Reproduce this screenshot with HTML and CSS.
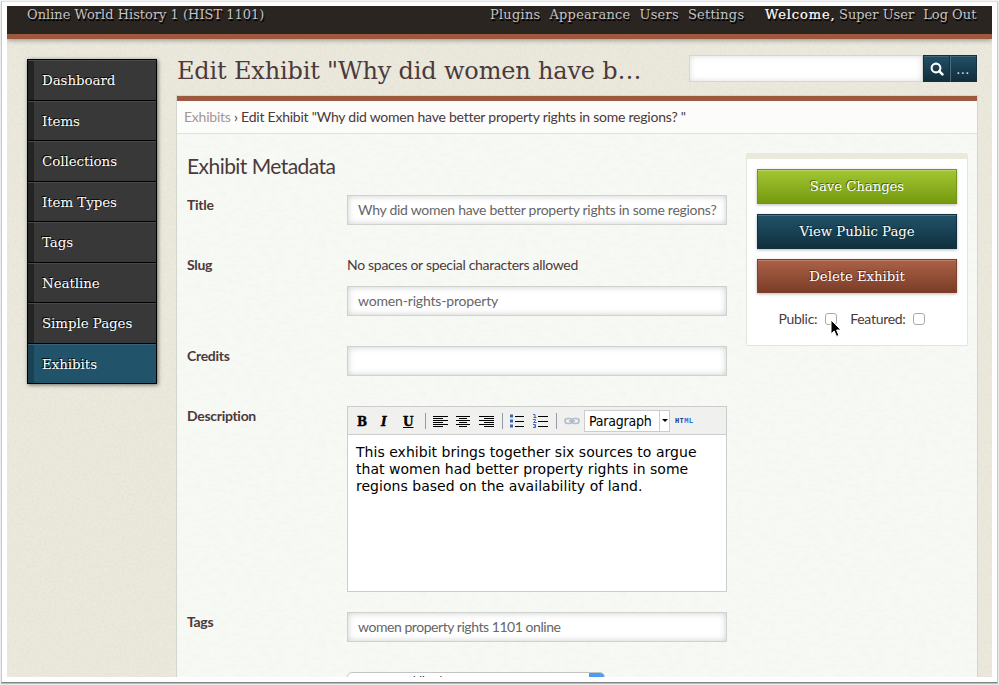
FILE: index.html
```
<!DOCTYPE html>
<html lang="en">
<head>
<meta charset="utf-8">
<title>Edit Exhibit</title>
<link rel="stylesheet" href="styles.css">
</head>
<body>
<div class="window">
<div class="screen">
  <header class="topbar">
    <a class="site-title">Online World History 1 (HIST 1101)</a>
    <nav class="global-nav"><a>Plugins</a><a>Appearance</a><a>Users</a><a>Settings</a></nav>
    <div class="user-nav"><span class="welcome">Welcome,</span><a class="user">Super User</a><a class="logout">Log Out</a></div>
  </header>
  <div class="layout">
    <nav class="sidebar">
      <a>Dashboard</a><a>Items</a><a>Collections</a><a>Item Types</a><a>Tags</a><a>Neatline</a><a>Simple Pages</a><a class="current">Exhibits</a>
    </nav>
    <main class="main">
      <div class="heading">
        <h1>Edit Exhibit "Why did women have b…</h1>
        <div class="search">
          <div class="search-input"></div>
          <button class="search-btn"><svg width="14" height="14" viewBox="0 0 14 14"><circle cx="6" cy="6" r="4.4" fill="none" stroke="#fff" stroke-width="2.1"/><path d="M9.2 9.2L12.4 12.4" stroke="#fff" stroke-width="2.6" stroke-linecap="round"/></svg></button>
          <button class="search-btn dots">...</button>
        </div>
      </div>
      <section class="content">
        <div class="crumbs"><a>Exhibits</a> › Edit Exhibit "Why did women have better property rights in some regions? "</div>
        <div class="columns">
          <div class="form">
            <h2>Exhibit Metadata</h2>
            <div class="field"><label>Title</label><div class="inputs"><div class="text-input title-input">Why did women have better property rights in some regions?</div></div></div>
            <div class="field"><label>Slug</label><div class="inputs"><p>No spaces or special characters allowed</p><div class="text-input slug-input">women-rights-property</div></div></div>
            <div class="field"><label>Credits</label><div class="inputs"><div class="text-input"></div></div></div>
            <div class="field field-desc"><label>Description</label>
              <div class="inputs">
                <div class="editor">
                  <div class="toolbar">
                    <b class="tb">B</b><i class="tb">I</i><u class="tb">U</u>
                    <span class="sep"></span>
                    <svg class="ic" width="16" height="14" viewBox="0 0 16 14"><path d="M0 2.5h15M0 4.5h10M0 6.500h15M0 8.500h10M0 10.500h15M0 12.500h10" stroke="#000"/></svg>
                    <svg class="ic" width="16" height="14" viewBox="0 0 16 14"><path d="M0 2.500h14M3 4.500h8M0 6.500h14M3 8.500h8M0 10.500h14M3 12.500h8" stroke="#000"/></svg>
                    <svg class="ic" width="16" height="14" viewBox="0 0 16 14"><path d="M0 2.500h15M5 4.500h10M0 6.500h15M5 8.500h10M0 10.500h15M5 12.500h10" stroke="#000"/></svg>
                    <span class="sep"></span>
                    <svg class="ic" width="16" height="14" viewBox="0 0 16 14"><path d="M5 2.500h9M5 7.500h9M5 12.500h9" stroke="#000"/><path d="M0 2h3M0 7h3M0 12h3" stroke="#3a64b0" stroke-width="3"/></svg>
                    <svg class="ic" width="16" height="14" viewBox="0 0 16 14"><path d="M5 2.500h10M5 7.500h10M5 12.500h10" stroke="#000"/><path d="M0 .5h2v3M.500 3.500h3M0 5.500h2.500v1l-2 2h3M0 10.500h2.500v3H0M1 12h1.500" stroke="#3b62c8" fill="none"/></svg>
                    <span class="sep"></span>
                    <svg class="ic link" width="16" height="14" viewBox="0 0 16 14"><g fill="none" stroke="#b3bccb" stroke-width="1.600"><rect x="1" y="4.500" width="7" height="5" rx="2.500"/><rect x="8" y="4.500" width="7" height="5" rx="2.500"/></g><path d="M5 7h6" stroke="#a9b5c9" stroke-width="1.500"/></svg>
                    <span class="select"><span class="value">Paragraph</span><span class="arrow"></span></span>
                    <span class="html">HT<em>ML</em></span>
                  </div>
                  <div class="editor-body">This exhibit brings together six sources to argue<br>that women had better property rights in some<br>regions based on the availability of land.</div>
                </div>
              </div>
            </div>
            <div class="field"><label>Tags</label><div class="inputs"><div class="text-input tags-input">women property rights 1101 online</div></div></div>
            <div class="field field-theme"><label>Theme</label><div class="inputs"><div class="theme-select"><span>Current Public Theme</span><b></b></div></div></div>
          </div>
          <aside class="panel">
            <button class="big green">Save Changes</button>
            <button class="big blue">View Public Page</button>
            <button class="big red">Delete Exhibit</button>
            <div class="checks">
              <span class="public">Public:</span><span class="box"><svg class="cursor" width="12" height="19" viewBox="0 0 12 19"><path d="M1 1v14l3.200-3 2.300 5.400 2.400-1L6.600 11H11z" fill="#000" stroke="#fff" stroke-width="1"/></svg></span>
              <span class="featured">Featured:</span><span class="box"></span>
            </div>
          </aside>
        </div>
      </section>
    </main>
  </div>
</div>
</div>
</body>
</html>
```
FILE: styles.css
```
* { box-sizing: border-box; }
body { margin: 0; width: 999px; height: 685px; overflow: hidden; background: #f4f4f4; font-family: "Lato", sans-serif; font-variant-ligatures: none; color: #4c393b; padding: 1px; }
.window { width: 997px; height: 682px; background: #fff; border: 1px solid #c9c9c9; border-top-color: #dedede; border-bottom: 1px solid #858585; box-shadow: 0 1px 1px #bbb; padding: 4px 0 0 5px; }
.screen { width: 985px; height: 671px; overflow: hidden; background: #ebe9dd url("data:image/svg+xml,%3Csvg xmlns='http://www.w3.org/2000/svg' width='200' height='200'%3E%3Cfilter id='n' x='0' y='0' width='1' height='1'%3E%3CfeTurbulence type='fractalNoise' baseFrequency='.4' numOctaves='2' stitchTiles='stitch'/%3E%3CfeColorMatrix values='0 0 0 0 .6 0 0 0 0 .57 0 0 0 0 .42 .35 0 0 0 -.13'/%3E%3C/filter%3E%3Crect width='200' height='200' filter='url(%23n)'/%3E%3C/svg%3E"); }
button { font: inherit; padding: 0; margin: 0; }
.topbar, .sidebar, h1, .big { font-family: "DejaVu Serif", serif; }
.topbar { height: 33px; background: #2b2522; border-bottom: 5px solid #9d5940; box-shadow: 0 1px 5px rgba(0,0,0,.4); display: flex; padding: 0 15px 0 20px; font-size: 13px; line-height: 17px; color: #c4c3c1; text-shadow: 1px 2px 0 #000; white-space: nowrap; }
.site-title { width: 463px; }
.global-nav { display: flex; gap: 9px; width: 275px; letter-spacing: .23px; }
.user-nav { display: flex; }
.welcome { color: #fff; width: 74px; letter-spacing: .9px; -webkit-text-stroke: .2px #fff; }
.logout { margin-left: 9px; }
.layout { display: flex; gap: 20px; padding: 16px 15px 0 20px; }
.sidebar { width: 130px; height: 325px; margin-top: 4px; display: grid; grid-template-rows: repeat(8, minmax(0, 1fr)); border: 1px solid #000; border-top: 0; box-shadow: 1px 1px 4px rgba(0,0,0,.55); }
.sidebar a { border-top: 1px solid #000; box-shadow: inset 0 1px #4b4b4b; padding: 1px 0 0 14px; line-height: 39px; font-size: 13.3px; color: #fff; text-shadow: -1px -1px 0 #000; background: linear-gradient(90deg, #242424 5px, #222 6px, #383838 6px); }
.sidebar .current { background: linear-gradient(90deg, #1b4152 6px, #21536a 6px); box-shadow: inset 0 1px #346377; }
.main { width: 800px; }
.heading { height: 41px; display: flex; justify-content: space-between; }
h1 { margin: 0; font-weight: 400; font-size: 24px; letter-spacing: -.17px; line-height: 32px; white-space: nowrap; }
.search { display: flex; width: 288px; height: 27px; }
.search-input { flex: 1; background: #fff; border: 1px solid #d6d6d2; box-shadow: inset 0 0 6px #ddd; }
.search-btn { width: 27px; color: #fff; border: 1px solid #12303f; background: linear-gradient(#215067, #122d3b); box-shadow: inset 0 1px #3e6578; display: grid; place-items: center; }
.search-btn.dots { border-left-color: #4c6d7d; font-size: 13px; letter-spacing: 1.5px; line-height: 20px; color: #dbe3e7; }
.content { border-top: 5px solid #9d5940; height: 600px; box-shadow: 0 0 0 1px #d3d6ca; background: #f7f9f4 url("data:image/svg+xml,%3Csvg xmlns='http://www.w3.org/2000/svg' width='200' height='200'%3E%3Cfilter id='n' x='0' y='0' width='1' height='1'%3E%3CfeTurbulence type='fractalNoise' baseFrequency='.12 .25' numOctaves='2' stitchTiles='stitch'/%3E%3CfeColorMatrix values='0 0 0 0 .6 0 0 0 0 .7 0 0 0 0 .6 .2 0 0 0 -.09'/%3E%3C/filter%3E%3Crect width='200' height='200' filter='url(%23n)'/%3E%3C/svg%3E"); }
.crumbs { height: 33px; background: #fcfcfa; border-bottom: 1px solid #dfe2dc; padding-left: 7px; font-size: 14px; letter-spacing: -.23px; line-height: 32px; white-space: nowrap; }
.crumbs a { color: #a59594; }
.columns { display: flex; padding: 0 9px 0 10px; justify-content: space-between; }
.form { width: 540px; padding-top: 19px; }
h2 { margin: 0; font-weight: 400; font-size: 21px; letter-spacing: -.55px; line-height: 26px; height: 42px; }
.field { display: flex; margin-bottom: 30px; font-size: 14px; letter-spacing: -.3px; }
label { width: 160px; font-weight: 700; line-height: 20px; }
.inputs { width: 380px; }
.inputs p { margin: 0 0 11px; line-height: 20px; }
.text-input { height: 30px; border: 1px solid #cfd2cf; background: #fff; box-shadow: inset 0 0 6px #ccc; padding: 0 9px 0 10px; line-height: 28px; color: #666; white-space: nowrap; overflow: hidden; }
.title-input { letter-spacing: -.27px; }
.slug-input { letter-spacing: -.17px; }
.tags-input { letter-spacing: -.45px; }
.field-desc { margin-bottom: 20px; }
.editor { height: 186px; border: 1px solid #ccc; background: #fff; letter-spacing: 0; }
.toolbar { height: 28px; background: #f0f0ee; border-bottom: 1px solid #ccc; display: flex; align-items: center; padding-left: 9px; }
.tb { font: 900 12px "DejaVu Serif", serif; color: #000; width: 23px; -webkit-text-stroke: .4px #000; padding-top: 2px; }
i.tb { font-style: italic; padding-left: 1px; }
u.tb { width: 22px; }
.sep { width: 1px; height: 16px; background: #9a9aa4; margin-right: 7px; flex: none; }
.ic { margin-right: 7px; flex: none; }
.ic.link { margin-right: 4px; }
.select { width: 86px; height: 22px; border: 1px solid #ccc; background: #fff; display: flex; color: #000; font: 14px/20px "DejaVu Sans Condensed", "DejaVu Sans", sans-serif; letter-spacing: -.2px; padding-left: 4px; }
.value { flex: 1; }
.arrow { width: 10px; border-left: 1px solid #ccc; display: grid; place-items: center; }
.arrow::after { content: ""; border: 3px solid transparent; border-top-color: #000; border-bottom: 0; }
.html { font: 700 7px "DejaVu Sans Mono", monospace; color: #17387e; margin-left: 5px; letter-spacing: .4px; padding-top: 1px; }
.html em { font-style: normal; color: #2f6de0; }
.editor-body { padding: 9px 8px; font: 14px/17px "DejaVu Sans", sans-serif; letter-spacing: .03px; color: #000; white-space: nowrap; }
.field-theme label { line-height: 19px; }
.theme-select { width: 258px; height: 22px; border: 1px solid #c4c4c4; border-radius: 5px; background: #fff; display: flex; justify-content: space-between; overflow: hidden; padding-left: 10px; color: #333; font-size: 11.5px; letter-spacing: 0; line-height: 16px; }
.theme-select b { width: 15px; background: #4a9cf6; }
.panel { width: 222px; height: 193px; margin-top: 19px; background: #fff; border: 1px solid #e2e4de; border-top: 6px solid #ebe9dc; border-radius: 2px; padding: 10px; display: flex; flex-direction: column; gap: 10px; }
.big { height: 35px; flex: none; color: #fff; font-size: 13.2px; line-height: 30px; border: 1px solid; text-shadow: -1px -1px 0 rgba(0,0,0,.5); }
.green { background: linear-gradient(#a2c733, #76990f); border-color: #749611; box-shadow: inset 0 1px #bad566, 0 1px 3px #bbb; }
.blue { background: linear-gradient(#21536a, #10303e); border-color: #12303e; box-shadow: inset 0 1px #53727f, 0 1px 3px #bbb; }
.red { height: 34px; padding-top: 2px; background: linear-gradient(#ab6147, #7b3d28); border-color: #7e412c; box-shadow: inset 0 1px #bf7e67, 0 1px 3px #bbb; }
.checks { display: flex; justify-content: center; align-items: center; height: 32px; padding-right: 10px; font-size: 14px; letter-spacing: -.3px; }
.checks span:not(.box) { position: relative; top: -1px; }
.box { width: 12px; height: 12px; border: 1px solid #aaa; border-radius: 3px; background: #fff; margin: 0 13px 0 8px; position: relative; }
.featured + .box { margin-right: 0; }
.cursor { position: absolute; left: 4px; top: 5px; }
```
